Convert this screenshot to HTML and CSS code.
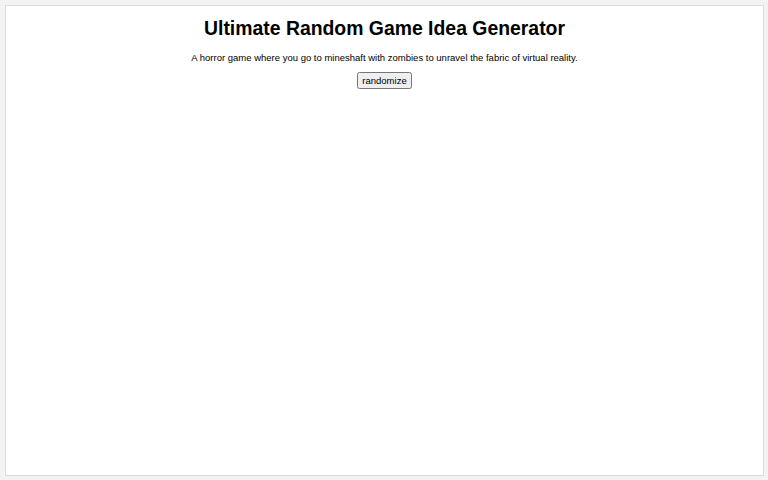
FILE: index.html
```html
<!DOCTYPE html>
<html>
<head>
  <meta charset="utf-8">
  <title>Ultimate Random Game Idea Generator</title>
  <link rel="stylesheet" href="styles.css">
</head>
<body>
  <div class="container">
    <h1>Ultimate Random Game Idea Generator</h1>
    <p id="idea">A horror game where you go to mineshaft with zombies to unravel the fabric of virtual reality.</p>
    <button id="randomize">randomize</button>
  </div>
</body>
</html>
```

FILE: styles.css
```css
* { box-sizing: border-box; }

html, body {
  height: 100%;
}

body {
  margin: 0;
  padding: 5px 4px 4px 5px;
  background: #f3f3f3;
  font-family: "Liberation Sans", Arial, sans-serif;
  color: #000;
}

.container {
  height: 471px;
  background: #fff;
  border: 1px solid #dcdcdc;
  text-align: center;
  padding-top: 8px;
}

h1 {
  margin: 0;
  font-size: 19.4px;
  font-weight: bold;
  line-height: 28px;
}

p {
  margin: 9px 0 5px;
  font-size: 9.5px;
  line-height: 14px;
}

button {
  font-family: "Liberation Sans", Arial, sans-serif;
  font-size: 9.5px;
  padding: 1px 3px;
}
```
